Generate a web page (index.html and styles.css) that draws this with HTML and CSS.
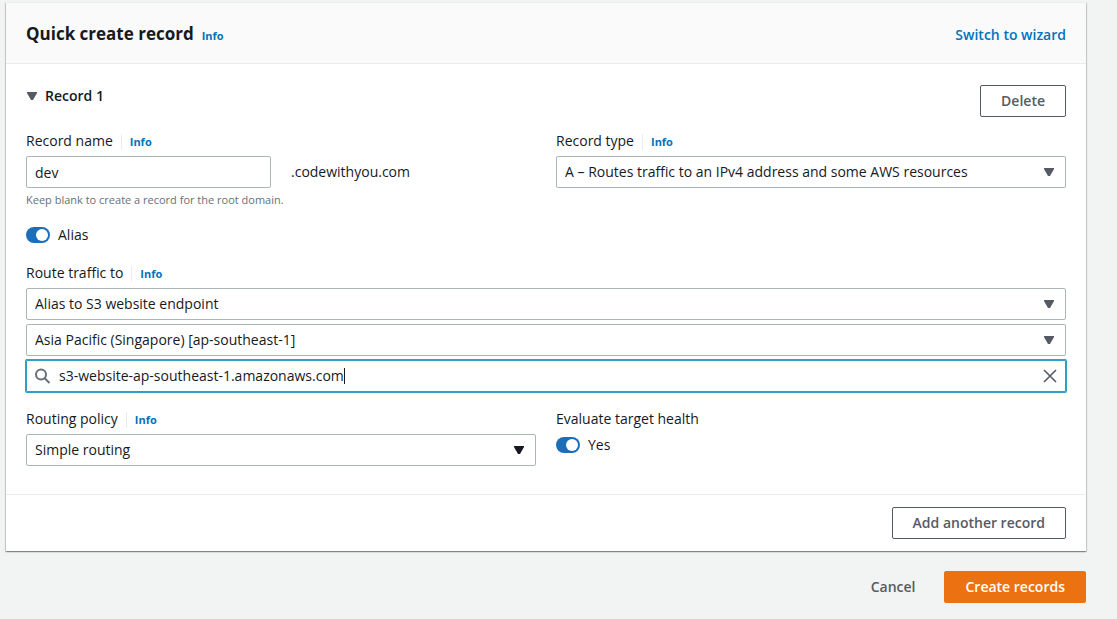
FILE: index.html
```
<!DOCTYPE html>
<html lang="en">
<head>
    <meta charset="UTF-8">
    <title>Quick create record</title>
    <link rel="stylesheet" href="styles.css">
</head>
<body>
    <form class="page">
        <section class="card">
            <header class="card-header">
                <h1>Quick create record</h1>
                <a class="info" href="#">Info</a>
                <a class="wizard-link" href="#">Switch to wizard</a>
            </header>

            <div class="card-body">
                <div class="record-header">
                    <h2>
                        <svg class="arrow" viewBox="0 0 10 8"><path d="M0 0h10v1L6 8H4L0 1z"/></svg>
                        Record 1
                    </h2>
                    <button type="button" class="button">Delete</button>
                </div>

                <div class="columns">
                    <div class="field">
                        <div class="label-row">
                            <label for="record-name">Record name</label>
                            <a class="info" href="#">Info</a>
                        </div>
                        <div class="columns name-row">
                            <input type="text" id="record-name" class="control" value="dev">
                            <span>.codewithyou.com</span>
                        </div>
                        <p class="hint">Keep blank to create a record for the root domain.</p>
                    </div>
                    <div class="field">
                        <div class="label-row">
                            <label for="record-type">Record type</label>
                            <a class="info" href="#">Info</a>
                        </div>
                        <div class="select">
                            <select id="record-type" class="control">
                                <option>A – Routes traffic to an IPv4 address and some AWS resources</option>
                            </select>
                            <svg class="arrow" viewBox="0 0 10 8"><path d="M0 0h10v1L6 8H4L0 1z"/></svg>
                        </div>
                    </div>
                </div>

                <label class="toggle">
                    <input type="checkbox" checked>
                    Alias
                </label>

                <div class="field">
                    <div class="label-row">
                        <label for="route-target">Route traffic to</label>
                        <a class="info" href="#">Info</a>
                    </div>
                    <div class="stack">
                        <div class="select">
                            <select id="route-target" class="control">
                                <option>Alias to S3 website endpoint</option>
                            </select>
                            <svg class="arrow" viewBox="0 0 10 8"><path d="M0 0h10v1L6 8H4L0 1z"/></svg>
                        </div>
                        <div class="select">
                            <select class="control" aria-label="Region">
                                <option>Asia Pacific (Singapore) [ap-southeast-1]</option>
                            </select>
                            <svg class="arrow" viewBox="0 0 10 8"><path d="M0 0h10v1L6 8H4L0 1z"/></svg>
                        </div>
                        <div class="search">
                            <svg class="search-icon" viewBox="0 0 16 16"><circle cx="6" cy="6.5" r="5"/><path d="M9.7 10.2l4.8 4.8"/></svg>
                            <input type="text" aria-label="Endpoint" value="s3-website-ap-southeast-1.amazonaws.com">
                            <span class="caret"></span>
                            <button type="button" class="clear" aria-label="Clear">
                                <svg viewBox="0 0 14 14"><path d="M1 1l12 12M13 1L1 13"/></svg>
                            </button>
                        </div>
                    </div>
                </div>

                <div class="columns">
                    <div class="field">
                        <div class="label-row">
                            <label for="routing-policy">Routing policy</label>
                            <a class="info" href="#">Info</a>
                        </div>
                        <div class="select dark">
                            <select id="routing-policy" class="control">
                                <option>Simple routing</option>
                            </select>
                            <svg class="arrow" viewBox="0 0 10 8"><path d="M0 0h10v1L6 8H4L0 1z"/></svg>
                        </div>
                    </div>
                    <div class="field">
                        <div class="label-row">
                            <span id="health-label">Evaluate target health</span>
                        </div>
                        <label class="toggle">
                            <input type="checkbox" aria-describedby="health-label" checked>
                            Yes
                        </label>
                    </div>
                </div>
            </div>

            <footer class="card-footer">
                <button type="button" class="button">Add another record</button>
            </footer>
        </section>

        <div class="actions">
            <button type="button" class="button link">Cancel</button>
            <button type="submit" class="button primary">Create records</button>
        </div>
    </form>
</body>
</html>
```
FILE: styles.css
```
* {
    box-sizing: border-box;
}

body {
    background-color: #f2f3f3;
    color: #16191f;
    font-family: "Open Sans", "Noto Sans", sans-serif;
    font-size: 14px;
    line-height: 22px;
    margin: 0;
}

h1, h2, p {
    margin: 0;
}

input, select, button {
    font: inherit;
    color: inherit;
}

a {
    color: #0073bb;
    font-weight: 700;
    text-decoration: none;
}

.page {
    padding: 2px 31px 16px 6px;
}

.card {
    background-color: #fff;
    border-top: 1px solid #eaeded;
    box-shadow: 0 1px 1px 0 rgba(0, 28, 36, 0.3), 1px 1px 1px 0 rgba(0, 28, 36, 0.15), -1px 1px 1px 0 rgba(0, 28, 36, 0.15);
}

.card-header {
    display: flex;
    align-items: baseline;
    gap: 8px;
    padding: 20px 20px 18px;
    background-color: #fafafa;
    border-bottom: 1px solid #eaeded;
}

h1 {
    font-size: 17px;
    line-height: 22px;
}

.info {
    font-size: 11px;
    line-height: 16px;
}

.wizard-link {
    margin-left: auto;
    font-weight: 600;
    line-height: 20px;
}

.card-body {
    display: flex;
    flex-direction: column;
    gap: 16px;
    padding: 21px 20px 28px;
}

.record-header {
    display: flex;
    justify-content: space-between;
    align-items: flex-start;
    margin-bottom: -3px;
}

h2 {
    display: flex;
    align-items: center;
    gap: 8px;
    padding-left: 1px;
    font-size: 14px;
    font-weight: 600;
}

.arrow {
    width: 10px;
    height: 8px;
    fill: #545b64;
}

.columns {
    display: grid;
    grid-template-columns: 1fr 1fr;
    gap: 20px;
}

.name-row {
    align-items: center;
}

.label-row {
    display: flex;
    align-items: baseline;
    margin-bottom: 4px;
}

.label-row .info {
    margin-left: 8px;
    padding-left: 8px;
    border-left: 1px solid #eaeded;
}

.control {
    display: block;
    width: 100%;
    height: 32px;
    padding: 0 8px;
    background-color: #fff;
    border: 1px solid #aab7b8;
    border-radius: 2px;
    appearance: none;
}

.select {
    position: relative;
}

.select .arrow {
    position: absolute;
    right: 12px;
    top: 12px;
    pointer-events: none;
}

.dark .arrow {
    fill: #16191f;
}

.hint {
    margin-top: 4px;
    color: #687078;
    font-size: 11px;
    font-weight: 500;
    line-height: 16px;
}

.toggle {
    display: flex;
    align-items: center;
    gap: 8px;
}

.toggle input {
    display: flex;
    justify-content: flex-end;
    width: 24px;
    height: 16px;
    margin: 0;
    padding: 2px;
    background-color: #1b6fb9;
    border-radius: 8px;
    appearance: none;
}

.toggle input::before {
    content: "";
    width: 12px;
    height: 12px;
    background-color: #fff;
    border-radius: 50%;
}

.stack {
    display: grid;
    gap: 4px;
}

.search {
    display: flex;
    align-items: center;
    height: 32px;
    padding: 0 9px;
    border-radius: 1px;
    box-shadow: 0 0 0 1px #2ea0c6, inset 0 0 0 1px #2ea0c6;
}

.search-icon {
    width: 16px;
    height: 16px;
    margin-right: 8px;
    fill: none;
    stroke: #687078;
    stroke-width: 2;
}

.search input {
    field-sizing: content;
    padding: 0;
    background: none;
    border: none;
    outline: none;
}

.caret {
    width: 1px;
    height: 16px;
    background-color: #16191f;
}

.clear {
    display: flex;
    margin-left: auto;
    padding: 0;
    background: none;
    border: none;
}

.clear svg {
    width: 14px;
    height: 14px;
    fill: none;
    stroke: #545b64;
    stroke-width: 1.6;
}

.card-footer {
    display: flex;
    justify-content: flex-end;
    padding: 12px 20px;
    border-top: 1px solid #eaeded;
}

.button {
    height: 32px;
    padding: 0 20px;
    background-color: #fff;
    border: 1px solid #545b64;
    border-radius: 2px;
    color: #545b64;
    font-weight: 600;
    line-height: 22px;
    cursor: pointer;
}

.link {
    background: none;
    border-color: transparent;
}

.primary {
    background-color: #ec7211;
    border-color: #ec7211;
    color: #fff;
}

.actions {
    display: flex;
    justify-content: flex-end;
    gap: 8px;
    margin-top: 20px;
}
```
